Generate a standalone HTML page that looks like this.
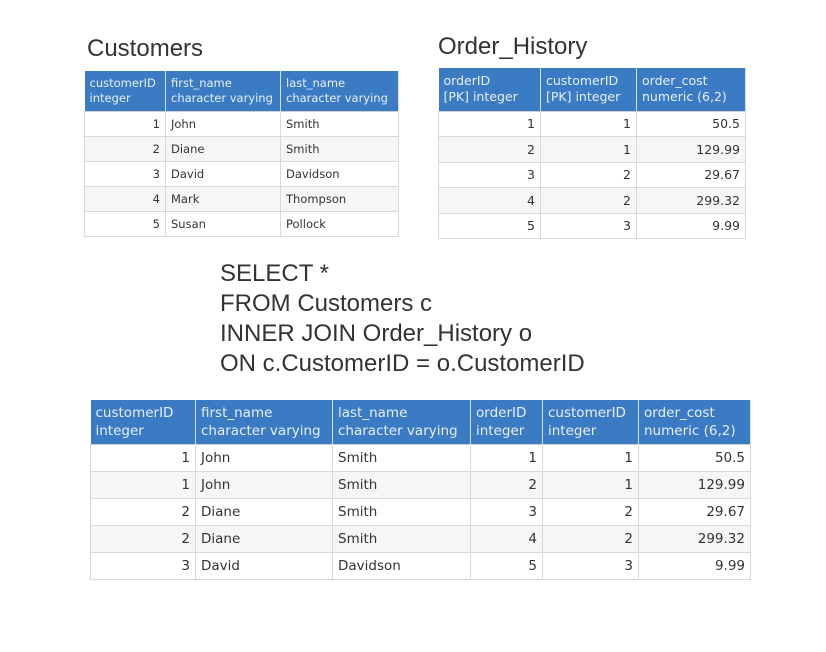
<!DOCTYPE html>
<html><head><meta charset="utf-8"><style>
body{margin:0;width:826px;height:652px;background:#fff;position:relative;overflow:hidden;font-family:"DejaVu Sans","Liberation Sans",sans-serif;}
.t{position:absolute;border-collapse:collapse;table-layout:fixed;color:#333;}
.t th{background:#3b7bc3;color:#e8f0fa;font-weight:normal;text-align:left;vertical-align:top;border-right:1px solid #cfe0f2;padding:5px 4px 0 5px;line-height:1.3;white-space:nowrap;overflow:hidden}
.t td{border:1px solid #d8d8d8;border-top:1px solid #d0d0d0;padding:0 5px;white-space:nowrap;overflow:hidden}
.t tr:nth-child(odd) td{background:#f6f6f6}
.r{text-align:right}
.title{position:absolute;font-family:"Liberation Sans",sans-serif;font-size:24px;color:#333;font-weight:300}
.sql{position:absolute;left:220px;top:259px;font-family:"Liberation Sans",sans-serif;font-size:24px;line-height:30px;color:#333}
</style></head><body>
<div class="title" style="left:87px;top:35px">Customers</div>
<div class="title" style="left:438px;top:33px">Order_History</div>

<table class="t" style="left:84px;top:71px;width:314px;font-size:11.5px">
<colgroup><col style="width:81px"><col style="width:115px"><col style="width:118px"></colgroup>
<tr style="height:40px"><th>customerID<br>integer</th><th>first_name<br>character varying</th><th>last_name<br>character varying</th></tr>
<tr style="height:25px"><td class="r">1</td><td>John</td><td>Smith</td></tr>
<tr style="height:25px"><td class="r">2</td><td>Diane</td><td>Smith</td></tr>
<tr style="height:25px"><td class="r">3</td><td>David</td><td>Davidson</td></tr>
<tr style="height:25px"><td class="r">4</td><td>Mark</td><td>Thompson</td></tr>
<tr style="height:25px"><td class="r">5</td><td>Susan</td><td>Pollock</td></tr>
</table>

<table class="t" style="left:438px;top:68px;width:307px;font-size:12.5px">
<colgroup><col style="width:102px"><col style="width:96px"><col style="width:109px"></colgroup>
<tr style="height:43px"><th>orderID<br>[PK] integer</th><th>customerID<br>[PK] integer</th><th>order_cost<br>numeric (6,2)</th></tr>
<tr style="height:25px"><td class="r">1</td><td class="r">1</td><td class="r">50.5</td></tr>
<tr style="height:26px"><td class="r">2</td><td class="r">1</td><td class="r">129.99</td></tr>
<tr style="height:25px"><td class="r">3</td><td class="r">2</td><td class="r">29.67</td></tr>
<tr style="height:26px"><td class="r">4</td><td class="r">2</td><td class="r">299.32</td></tr>
<tr style="height:25px"><td class="r">5</td><td class="r">3</td><td class="r">9.99</td></tr>
</table>

<div class="sql">SELECT *<br>FROM Customers c<br>INNER JOIN Order_History o<br>ON c.CustomerID = o.CustomerID</div>

<table class="t" style="left:90px;top:400px;width:660px;font-size:13.5px">
<colgroup><col style="width:105px"><col style="width:137px"><col style="width:138px"><col style="width:72px"><col style="width:96px"><col style="width:112px"></colgroup>
<tr style="height:44px"><th>customerID<br>integer</th><th>first_name<br>character varying</th><th>last_name<br>character varying</th><th>orderID<br>integer</th><th>customerID<br>integer</th><th>order_cost<br>numeric (6,2)</th></tr>
<tr style="height:27px"><td class="r">1</td><td>John</td><td>Smith</td><td class="r">1</td><td class="r">1</td><td class="r">50.5</td></tr>
<tr style="height:27px"><td class="r">1</td><td>John</td><td>Smith</td><td class="r">2</td><td class="r">1</td><td class="r">129.99</td></tr>
<tr style="height:27px"><td class="r">2</td><td>Diane</td><td>Smith</td><td class="r">3</td><td class="r">2</td><td class="r">29.67</td></tr>
<tr style="height:27px"><td class="r">2</td><td>Diane</td><td>Smith</td><td class="r">4</td><td class="r">2</td><td class="r">299.32</td></tr>
<tr style="height:27px"><td class="r">3</td><td>David</td><td>Davidson</td><td class="r">5</td><td class="r">3</td><td class="r">9.99</td></tr>
</table>
</body></html>
